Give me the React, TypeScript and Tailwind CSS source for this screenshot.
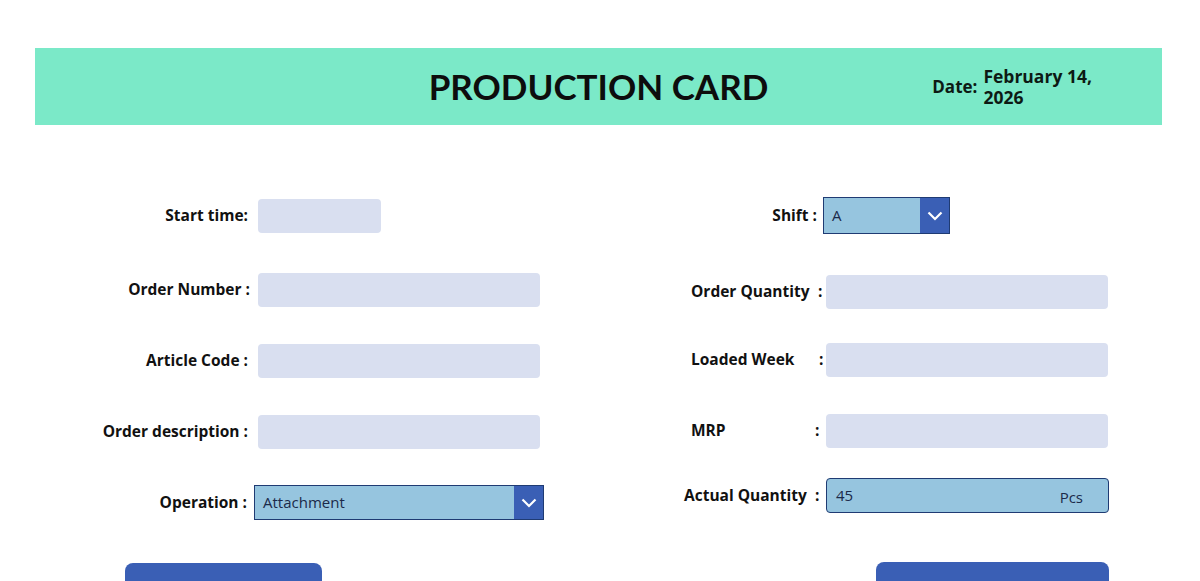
const label = "font-['Open_Sans',sans-serif] font-bold text-[15.5px] text-[#111]";
const input = "h-[34px] rounded-[4px] bg-[#d9dff0]";

function Chevron() {
  return (
    <svg width="16" height="10" viewBox="0 0 16 10" fill="none">
      <path d="M1.5 1.5 8 8l6.5-6.5" stroke="white" strokeWidth="2.2" />
    </svg>
  );
}

function Dropdown({ value, className }: { value: string; className: string }) {
  return (
    <div className={`flex border border-[#1f3b73] bg-[#96c5df] ${className}`}>
      <div className="flex flex-1 items-center pl-2 font-['Open_Sans',sans-serif] text-[15px] text-[#1b2a4a]">
        {value}
      </div>
      <div className="flex w-[29px] items-center justify-center bg-[#3a5fb5]">
        <Chevron />
      </div>
    </div>
  );
}

function LeftRow({ name, mt, w, children }: { name: string; mt: string; w: string; children: React.ReactNode }) {
  return (
    <div className={`flex items-center ${mt}`}>
      <div className={`shrink-0 text-right ${w} ${label}`}>{name}</div>
      {children}
    </div>
  );
}

function RightRow({ name, mt, nameW, colonW, children }: { name: string; mt: string; nameW: string; colonW: string; children: React.ReactNode }) {
  return (
    <div className={`flex items-center ${mt}`}>
      <span className={`shrink-0 pl-[11px] ${nameW} ${label}`}>{name}</span>
      <span className={`shrink-0 ${colonW} ${label}`}>:</span>
      {children}
    </div>
  );
}

export default function App() {
  return (
    <div className="w-[1200px] bg-white pt-[48px]">
      <div className="ml-[35px] grid h-[77px] w-[1127px] grid-cols-[minmax(0,1fr)_auto_minmax(0,1fr)] items-center bg-[#7be9c8]">
        <div />
        <h1 className="font-['Lato',sans-serif] text-[35px] font-bold text-[#0d0d0d]">PRODUCTION CARD</h1>
        <div className="flex items-center pl-[164px] font-['Open_Sans',sans-serif] font-bold text-[#0d1a14]">
          <span className="text-[17px]">Date:</span>
          <span className="ml-[6px] w-[135px] shrink-0 text-[17.5px] leading-[21px]">February 14, 2026</span>
        </div>
      </div>

      <div className="flex">
        <div className="w-[680px] shrink-0">
          <LeftRow name="Start time:" mt="mt-[74px]" w="w-[248px]">
            <div className={`ml-[10px] w-[123px] ${input}`} />
          </LeftRow>
          <LeftRow name="Order Number :" mt="mt-[40px]" w="w-[250px]">
            <div className={`ml-[8px] w-[282px] ${input}`} />
          </LeftRow>
          <LeftRow name="Article Code :" mt="mt-[37px]" w="w-[248px]">
            <div className={`ml-[10px] w-[282px] ${input}`} />
          </LeftRow>
          <LeftRow name="Order description :" mt="mt-[37px]" w="w-[248px]">
            <div className={`ml-[10px] w-[282px] ${input}`} />
          </LeftRow>
          <LeftRow name="Operation :" mt="mt-[36px]" w="w-[247px]">
            <Dropdown value="Attachment" className="ml-[7px] h-[35px] w-[290px]" />
          </LeftRow>
          <button className="ml-[125px] mt-[43px] block h-[45px] w-[197px] rounded-[8px] bg-[#3a5fb5]" />
        </div>

        <div className="w-[520px] shrink-0">
          <div className="mt-[72px] flex items-center">
            <div className={`w-[137px] shrink-0 text-right ${label}`}>Shift :</div>
            <Dropdown value="A" className="ml-[6px] h-[37px] w-[127px]" />
          </div>
          <RightRow name="Order Quantity" mt="mt-[41px]" nameW="w-[138px]" colonW="w-[8px]">
            <div className={`w-[282px] ${input}`} />
          </RightRow>
          <RightRow name="Loaded Week" mt="mt-[34px]" nameW="w-[139px]" colonW="w-[7px]">
            <div className={`w-[282px] ${input}`} />
          </RightRow>
          <RightRow name="MRP" mt="mt-[37px]" nameW="w-[135px]" colonW="w-[11px]">
            <div className={`w-[282px] ${input}`} />
          </RightRow>
          <div className="mt-[30px] flex items-center">
            <span className={`w-[135px] shrink-0 pl-[4px] ${label}`}>Actual Quantity</span>
            <span className={`w-[11px] shrink-0 ${label}`}>:</span>
            <div className="flex h-[35px] w-[283px] items-start justify-between rounded-[4px] border-[1.5px] border-[#1f3b73] bg-[#96c5df] pl-[9px] pr-[25px] pt-[5px] font-['Open_Sans',sans-serif] text-[15px] text-[#1b2a4a]">
              <span>45</span>
              <span className="pt-[2px]">Pcs</span>
            </div>
          </div>
          <button className="ml-[196px] mt-[49px] block h-[45px] w-[233px] rounded-[8px] bg-[#3a5fb5]" />
        </div>
      </div>
    </div>
  );
}
